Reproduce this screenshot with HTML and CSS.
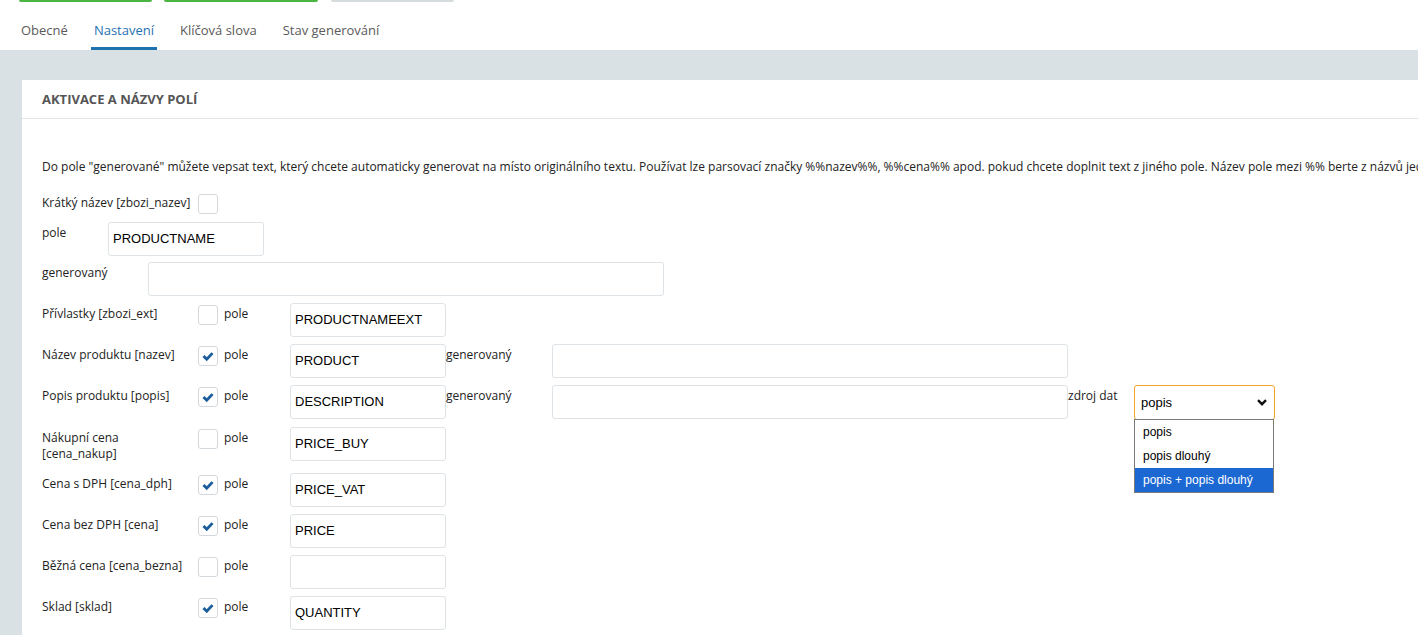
FILE: index.html
```html
<!DOCTYPE html>
<html lang="cs">
<head>
<meta charset="utf-8">
<title>Nastavení</title>
<link rel="stylesheet" href="styles.css">
</head>
<body>
<div class="topbar">
  <span class="tbtn green b1"></span>
  <span class="tbtn green b2"></span>
  <span class="tbtn gray b3"></span>
</div>
<nav class="tabs">
  <a class="tab">Obecné</a>
  <a class="tab active">Nastavení</a>
  <a class="tab">Klíčová slova</a>
  <a class="tab">Stav generování</a>
</nav>
<main class="page">
  <section class="card">
    <header class="card-head">AKTIVACE A NÁZVY POLÍ</header>
    <div class="card-body">
      <p class="hint">Do pole "generované" můžete vepsat text, který chcete automaticky generovat na místo originálního textu. Používat lze parsovací značky %%nazev%%, %%cena%% apod. pokud chcete doplnit text z jiného pole. Název pole mezi %% berte z názvů jednotlivých polí v hranatých závorkách.</p>

      <div class="row first">
        <span class="lbl">Krátký název [zbozi_nazev]</span>
        <span class="cb"></span>
      </div>
      <div class="row tight">
        <span class="lbl w66">pole</span>
        <span class="inp">PRODUCTNAME</span>
      </div>
      <div class="row">
        <span class="lbl w106">generovaný</span>
        <span class="inp wide"></span>
      </div>

      <div class="row">
        <span class="lbl">Přívlastky [zbozi_ext]</span>
        <span class="cb"></span>
        <span class="lbl w66 sub">pole</span>
        <span class="inp">PRODUCTNAMEEXT</span>
      </div>
      <div class="row">
        <span class="lbl">Název produktu [nazev]</span>
        <span class="cb on"><svg viewBox="0 0 20 20"><path d="M5 10 L8.6 13.6 L15 6.8"/></svg></span>
        <span class="lbl w66 sub">pole</span>
        <span class="inp">PRODUCT</span>
        <span class="lbl w106">generovaný</span>
        <span class="inp wide"></span>
      </div>
      <div class="row">
        <span class="lbl">Popis produktu [popis]</span>
        <span class="cb on"><svg viewBox="0 0 20 20"><path d="M5 10 L8.6 13.6 L15 6.8"/></svg></span>
        <span class="lbl w66 sub">pole</span>
        <span class="inp">DESCRIPTION</span>
        <span class="lbl w106">generovaný</span>
        <span class="inp wide"></span>
        <span class="lbl w66">zdroj dat</span>
        <div class="sel-wrap">
          <div class="sel">popis<svg class="chev" viewBox="0 0 10 7"><polyline points="1,1.2 5,5.2 9,1.2"/></svg></div>
          <ul class="dd">
            <li>popis</li>
            <li>popis dlouhý</li>
            <li class="hl">popis + popis dlouhý</li>
          </ul>
        </div>
      </div>
      <div class="row">
        <span class="lbl two">Nákupní cena<br>[cena_nakup]</span>
        <span class="cb"></span>
        <span class="lbl w66 sub">pole</span>
        <span class="inp">PRICE_BUY</span>
      </div>
      <div class="row">
        <span class="lbl">Cena s DPH [cena_dph]</span>
        <span class="cb on"><svg viewBox="0 0 20 20"><path d="M5 10 L8.6 13.6 L15 6.8"/></svg></span>
        <span class="lbl w66 sub">pole</span>
        <span class="inp">PRICE_VAT</span>
      </div>
      <div class="row">
        <span class="lbl">Cena bez DPH [cena]</span>
        <span class="cb on"><svg viewBox="0 0 20 20"><path d="M5 10 L8.6 13.6 L15 6.8"/></svg></span>
        <span class="lbl w66 sub">pole</span>
        <span class="inp">PRICE</span>
      </div>
      <div class="row">
        <span class="lbl">Běžná cena [cena_bezna]</span>
        <span class="cb"></span>
        <span class="lbl w66 sub">pole</span>
        <span class="inp"></span>
      </div>
      <div class="row">
        <span class="lbl">Sklad [sklad]</span>
        <span class="cb on"><svg viewBox="0 0 20 20"><path d="M5 10 L8.6 13.6 L15 6.8"/></svg></span>
        <span class="lbl w66 sub">pole</span>
        <span class="inp">QUANTITY</span>
      </div>
    </div>
  </section>
</main>
</body>
</html>
```

FILE: styles.css
```css
html, body {
  margin: 0;
  padding: 0;
  background: #fff;
  overflow: hidden;
  height: 635px;
}
body {
  font-family: "Open Sans", "DejaVu Sans", sans-serif;
  font-size: 12px;
  color: #222;
}

.topbar {
  height: 3px;
  display: flex;
  padding-left: 19px;
}
.tbtn {
  height: 2px;
  border-radius: 0 0 2px 2px;
  margin-right: 12px;
}
.tbtn.green { background: #4bb543; }
.tbtn.gray { background: #d6dbde; }
.b1 { width: 133px; }
.b2 { width: 154px; }
.b3 { width: 123px; margin-left: 1px; }

.tabs {
  height: 47px;
  display: flex;
  padding-left: 18px;
  gap: 20px;
}
.tab {
  font-size: 13px;
  line-height: 18px;
  color: #5a5a5a;
  padding: 18px 3px 0;
  height: 26px;
  border-bottom: 3px solid transparent;
}
.tab.active {
  color: #1f72b0;
  border-bottom-color: #1f72b0;
}

.page {
  background: #dae1e4;
  padding: 30px 0 0 22px;
  height: 600px;
}
.card {
  background: #fff;
  margin-right: -400px;
  height: 600px;
}
.card-head {
  height: 38px;
  display: flex;
  align-items: center;
  padding-left: 20px;
  font-weight: 700;
  font-size: 13px;
  color: #555;
  border-bottom: 1px solid #e1e6e9;
}
.card-body {
  padding: 40px 20px 0;
}
.hint {
  margin: 0 0 17px;
  line-height: 16px;
  white-space: nowrap;
}

.row {
  display: flex;
  align-items: flex-start;
  margin-bottom: 7px;
}
.row.first { margin-bottom: 8px; }
.row.tight { margin-bottom: 6px; }
.lbl {
  width: 156px;
  flex: none;
  padding: 3px 0 3px;
  line-height: 16px;
}
.lbl.two { padding-bottom: 4px; }
.lbl.w66 { width: 66px; }
.lbl.w106 { width: 106px; }
.lbl.sub { margin-left: 6px; }

.cb {
  flex: none;
  width: 18px;
  height: 18px;
  margin-top: 2px;
  border: 1px solid #d3d9dd;
  border-radius: 3px;
  background: #fff;
  display: flex;
}
.cb svg {
  width: 18px;
  height: 18px;
}
.cb svg path {
  fill: none;
  stroke: #1c5e9c;
  stroke-width: 3.2;
}

.inp {
  flex: none;
  box-sizing: border-box;
  width: 156px;
  height: 34px;
  border: 1px solid #dde3e6;
  border-radius: 3px;
  padding: 0 4px;
  font-family: "Liberation Sans", Arial, sans-serif;
  font-size: 13px;
  line-height: 31px;
  color: #000;
}
.inp.wide { width: 516px; }

.sel-wrap {
  position: relative;
  flex: none;
}
.sel {
  box-sizing: border-box;
  width: 141px;
  height: 35px;
  border: 1px solid #f5a42a;
  border-radius: 3px;
  padding: 0 6px;
  font-family: "Liberation Sans", Arial, sans-serif;
  font-size: 13px;
  line-height: 33px;
  color: #000;
  display: flex;
  justify-content: space-between;
  align-items: center;
}
.chev {
  width: 10px;
  height: 7px;
  margin-right: 1px;
}
.chev polyline {
  fill: none;
  stroke: #111;
  stroke-width: 2.4;
}
.dd {
  position: absolute;
  left: 0;
  top: 34px;
  box-sizing: border-box;
  width: 140px;
  margin: 0;
  padding: 0;
  list-style: none;
  border: 1px solid #7a7a7a;
  background: #fff;
  font-family: "Liberation Sans", Arial, sans-serif;
  font-size: 12px;
}
.dd li {
  height: 24px;
  line-height: 24px;
  padding-left: 8px;
  color: #000;
}
.dd li.hl {
  background: #1b68d3;
  color: #fff;
}
```
